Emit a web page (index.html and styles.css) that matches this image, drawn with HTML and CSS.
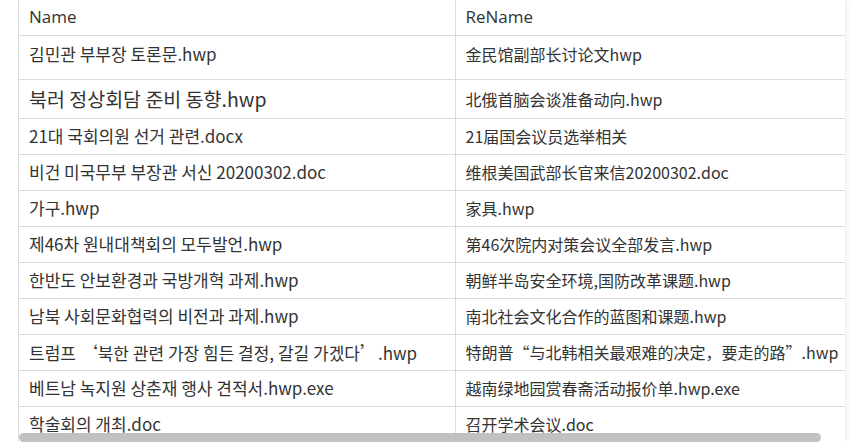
FILE: index.html
```html
<!DOCTYPE html>
<html>
<head>
<meta charset="utf-8">
<link rel="stylesheet" href="styles.css">
</head>
<body>
<div class="wrap">
  <div class="viewport">
    <table class="grid">
      <colgroup><col class="c1"><col class="c2"></colgroup>
      <thead>
        <tr class="head"><th>Name</th><th>ReName</th></tr>
      </thead>
      <tbody>
        <tr class="first"><td class="ko">김민관 부부장 토론문.hwp</td><td class="zh">金民馆副部长讨论文hwp</td></tr>
        <tr class="big"><td class="ko">북러 정상회담 준비 동향.hwp</td><td class="zh">北俄首脑会谈准备动向.hwp</td></tr>
        <tr><td class="ko">21대 국회의원 선거 관련.docx</td><td class="zh">21届国会议员选举相关</td></tr>
        <tr><td class="ko">비건 미국무부 부장관 서신 20200302.doc</td><td class="zh">维根美国武部长官来信20200302.doc</td></tr>
        <tr><td class="ko">가구.hwp</td><td class="zh">家具.hwp</td></tr>
        <tr><td class="ko">제46차 원내대책회의 모두발언.hwp</td><td class="zh">第46次院内对策会议全部发言.hwp</td></tr>
        <tr><td class="ko">한반도 안보환경과 국방개혁 과제.hwp</td><td class="zh">朝鲜半岛安全环境,国防改革课题.hwp</td></tr>
        <tr><td class="ko">남북 사회문화협력의 비전과 과제.hwp</td><td class="zh">南北社会文化合作的蓝图和课题.hwp</td></tr>
        <tr><td class="ko">트럼프 <span class="fw">‘</span>북한 관련 가장 힘든 결정, 갈길 가겠다<span class="fw">’</span>.hwp</td><td class="zh">特朗普“与北韩相关最艰难的决定，要走的路”.hwp</td></tr>
        <tr><td class="ko">베트남 녹지원 상춘재 행사 견적서.hwp.exe</td><td class="zh">越南绿地园赏春斋活动报价单.hwp.exe</td></tr>
        <tr><td class="ko">학술회의 개최.doc</td><td class="zh">召开学术会议.doc</td></tr>
      </tbody>
    </table>
  </div>
  <div class="scrollbar"><div class="thumb"></div></div>
</div>
</body>
</html>
```
FILE: styles.css
```css
html, body {
  margin: 0;
  padding: 0;
  background: #fff;
}
body {
  font-family: "Noto Sans CJK KR", "Noto Sans CJK SC", sans-serif;
  color: #333;
}
.wrap {
  margin-left: 18px;
  width: 826px;
  border-left: 1px solid #dcdcdc;
  box-shadow: 3px 0 4px -1px rgba(0,0,0,0.07);
}
.viewport {
  height: 433px;
  overflow: hidden;
}
.grid {
  border-collapse: collapse;
  table-layout: fixed;
  width: 826px;
}
.c1 { width: 436px; }
.c2 { width: 390px; }
.grid th, .grid td {
  text-align: left;
  font-weight: normal;
  padding: 0 10px;
  height: 36px;
  border-bottom: 1px solid #dcdcdc;
  white-space: nowrap;
  overflow: hidden;
  font-size: 16px;
  line-height: 20px;
  box-sizing: border-box;
}
.grid th + th, .grid td + td {
  border-left: 1px solid #dcdcdc;
}
.grid th {
  height: 35px;
  font-size: 17px;
  font-family: "Open Sans", sans-serif;
  color: #333;
}
.grid .zh {
  font-family: "Noto Sans CJK SC", sans-serif;
}
.grid .ko {
  font-family: "Noto Sans CJK KR", sans-serif;
  font-size: 17px;
}
.fw {
  font-family: "Noto Sans CJK SC", sans-serif;
  font-size: 18px;
}
.first td {
  height: 44px;
  vertical-align: top;
  padding-top: 8px;
}
.big td {
  height: 39px;
}
.grid .big td.ko {
  font-size: 19.5px;
}
.scrollbar {
  height: 9px;
  background: #fff;
}
.thumb {
  width: 802px;
  height: 9px;
  border-radius: 5px;
  background: #c1c1c1;
}
```
